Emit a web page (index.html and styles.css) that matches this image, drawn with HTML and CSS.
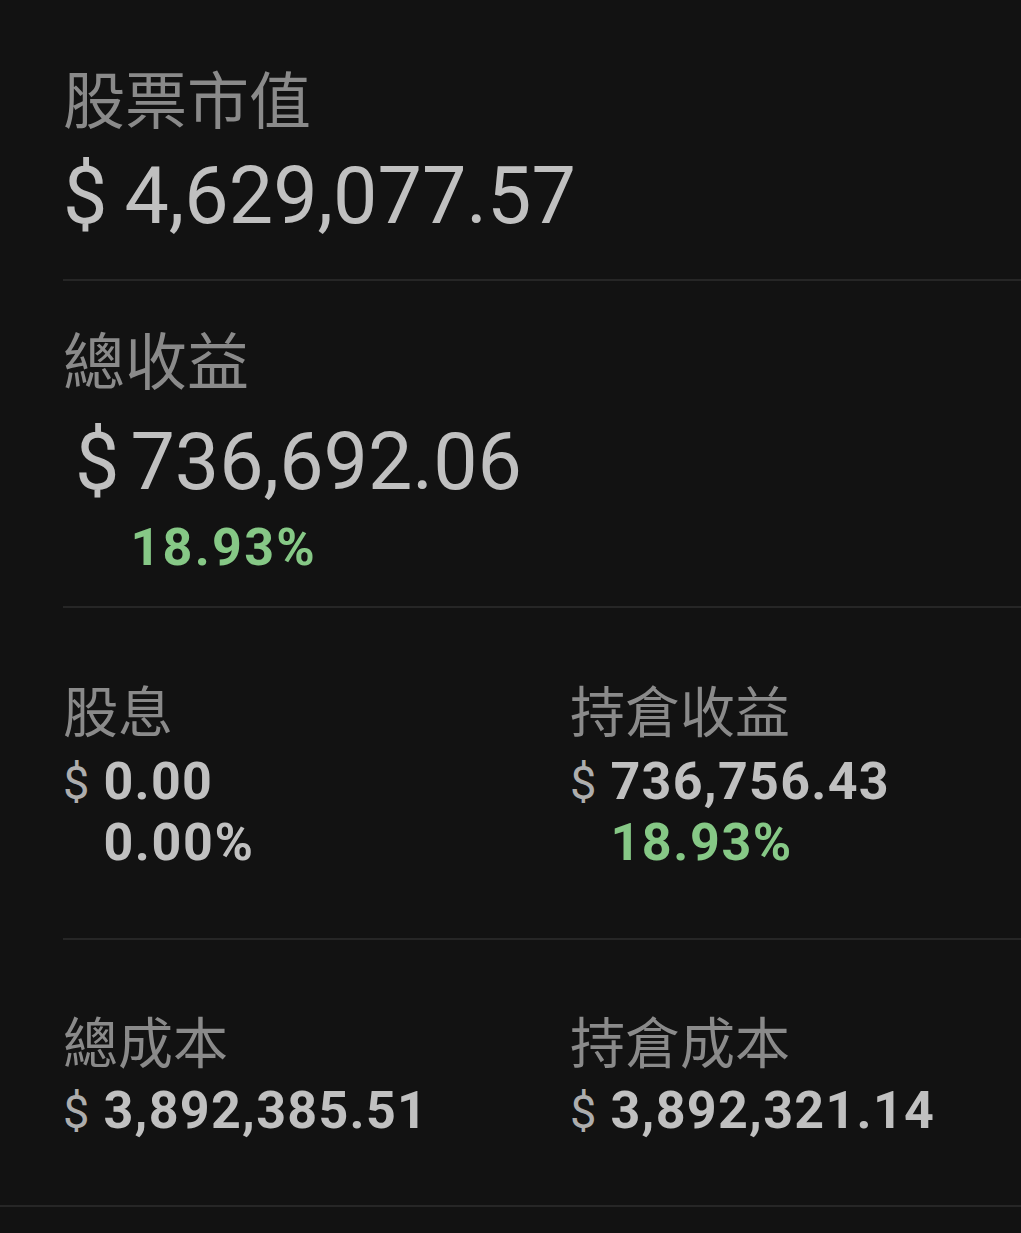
FILE: index.html
```html
<!DOCTYPE html>
<html lang="zh-Hant">
<head>
  <meta charset="UTF-8" />
  <meta name="viewport" content="width=device-width, initial-scale=1.0"/>
  <title>持倉摘要</title>
  <link rel="stylesheet" href="styles.css">
</head>
<body>
  <div class="summary">
    <section class="block block-value">
      <div class="label">股票市值</div>
      <div class="amount amount-lg">
        <span class="cur">$</span>
        <span class="num">4,629,077.57</span>
      </div>
    </section>

    <section class="block block-profit">
      <div class="label">總收益</div>
      <div class="amount amount-lg amount-indent">
        <span class="cur">$</span>
        <div class="num-col">
          <span class="num">736,692.06</span>
          <span class="pct up">18.93%</span>
        </div>
      </div>
    </section>

    <section class="block block-split">
      <div class="stat">
        <div class="label label-sm">股息</div>
        <div class="amount amount-sm">
          <span class="cur">$</span>
          <div class="num-col">
            <span class="num">0.00</span>
            <span class="pct">0.00%</span>
          </div>
        </div>
      </div>
      <div class="stat">
        <div class="label label-sm">持倉收益</div>
        <div class="amount amount-sm">
          <span class="cur">$</span>
          <div class="num-col">
            <span class="num">736,756.43</span>
            <span class="pct up">18.93%</span>
          </div>
        </div>
      </div>
    </section>

    <section class="block block-split block-cost">
      <div class="stat">
        <div class="label label-sm">總成本</div>
        <div class="amount amount-sm">
          <span class="cur">$</span>
          <span class="num">3,892,385.51</span>
        </div>
      </div>
      <div class="stat">
        <div class="label label-sm">持倉成本</div>
        <div class="amount amount-sm">
          <span class="cur">$</span>
          <span class="num">3,892,321.14</span>
        </div>
      </div>
    </section>
  </div>
  <div class="rule"></div>
</body>
</html>
```

FILE: styles.css
```css
:root {
  --bg: #121212;
  --divider: #262626;
  --label: #8a8a8a;
  --value: #c0c0c0;
  --cur: #adadad;
  --up: #86c886;
}

body {
  margin: 0;
  background: var(--bg);
  font-family: Roboto, "Noto Sans CJK TC", sans-serif;
  color: var(--value);
  min-height: 100vh;
}

.summary {
  margin-left: 63px;
}

.block {
  border-bottom: 2px solid var(--divider);
}

.label {
  font-family: "Noto Sans CJK TC", sans-serif;
  font-size: 62px;
  line-height: 62px;
  color: var(--label);
}

.label-sm {
  font-size: 55px;
  line-height: 55px;
}

.amount {
  display: flex;
  align-items: baseline;
}

.num-col {
  display: flex;
  flex-direction: column;
}

/* big figures */
.amount-lg {
  font-size: 79px;
  line-height: 80px;
}

.amount-lg .cur {
  margin-right: 17px;
}

.amount-indent {
  padding-left: 12px;
}

.amount-indent .cur {
  margin-right: 11px;
}

.amount-lg .pct {
  margin-top: 20px;
}

/* smaller bold figures */
.amount-sm {
  font-size: 52px;
  line-height: 52px;
}

.amount-sm .cur {
  font-size: 47px;
  color: var(--cur);
  margin-right: 14px;
}

.amount-sm .num {
  font-weight: 700;
  letter-spacing: 1.3px;
}

.amount-sm .pct {
  margin-top: 9px;
  letter-spacing: 1.6px;
}

.pct {
  font-size: 52px;
  line-height: 52px;
  font-weight: 700;
  letter-spacing: 2.3px;
}

.pct.up {
  color: var(--up);
}

.block-value {
  padding: 66px 0 43px;
}

.block-value .amount {
  margin-top: 28px;
}

.block-profit {
  padding: 46px 0 32px;
}

.block-profit .amount {
  margin-top: 33px;
}

.block-split {
  display: grid;
  grid-template-columns: 507px 1fr;
  padding: 73px 0 69px;
}

.block-split .amount {
  margin-top: 20px;
}

.block-cost {
  border-bottom: none;
  padding: 72px 0 67px;
}

.block-cost .amount {
  margin-top: 18px;
}

.rule {
  height: 2px;
  background: var(--divider);
}
```
